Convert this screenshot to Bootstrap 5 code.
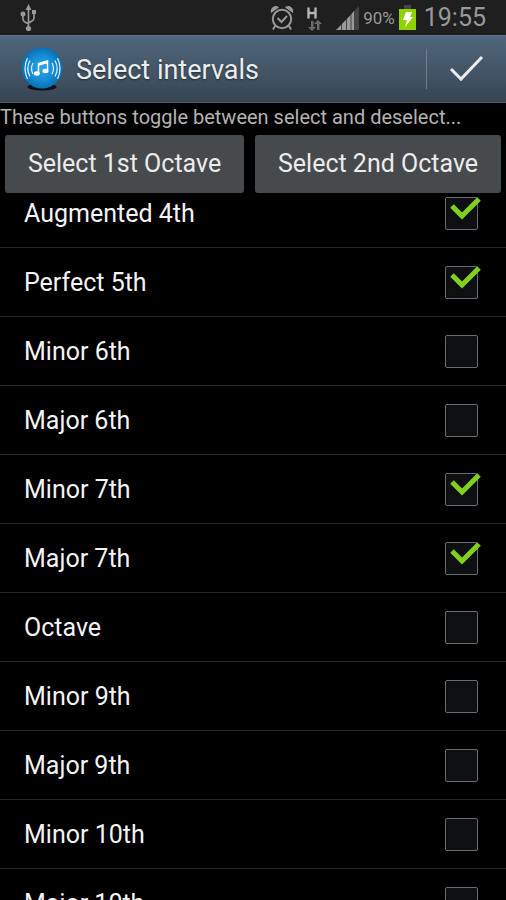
<!DOCTYPE html>
<html lang="en">
<head>
<meta charset="utf-8">
<meta name="viewport" content="width=device-width, initial-scale=1">
<title>Select intervals</title>
<link href="https://cdn.jsdelivr.net/npm/bootstrap@5.3.0/dist/css/bootstrap.min.css" rel="stylesheet">
<style>
body{background:#000;color:#f3f3f3;font-family:Roboto,"Liberation Sans",sans-serif;font-size:25px;line-height:32px}
.status-bar{height:35px;background:#1f1f1f;color:#999;padding:0 20px}
.status-bar svg,.title-bar svg{display:block;flex:none}
.level{font-size:17px;line-height:24px}
.clock{font-size:25px;line-height:32px}
.title-bar{height:68px;padding:0 21px 0 20px;background:linear-gradient(#50677d,#374553);border-top:1px solid #5a7188;border-bottom:1px solid #4a6072;color:#ececec}
.title-bar h1{padding-top:2px;font-size:27px;line-height:32px;font-weight:400;text-shadow:0 1px 2px #1d2a35}
.done-btn{height:40px;padding:0 0 0 22px;border:0;border-left:1px solid #71808d;border-radius:0}
.hint{color:#b3b3b3;font-size:20px;line-height:28px}
.toggles{padding:4px 5px 2px;gap:11px}
.toggle-btn{height:58px;padding:0;background:#464a4d;color:#ececec;font-size:25px;line-height:32px;border:0;border-radius:3px}
.toggle-btn:hover{background:#565b5f;color:#fff}
.interval-list{margin-top:-16px}
.interval-row{height:69px;padding:0 28px 0 24px;border-bottom:1px solid #292929}
.interval-name{padding-top:2px}
.tick-box{width:33px;height:33px}
.tick-box input{appearance:none;display:block;width:33px;height:33px;margin:0;background:#0d0f11;border:1px solid #656c75;border-radius:2px}
.tick-box svg{display:none;left:0;top:0;overflow:visible;pointer-events:none}
.tick-box input:checked + svg{display:block}
</style>
</head>
<body class="vh-100 d-flex flex-column overflow-hidden">
<div class="status-bar d-flex align-items-center flex-shrink-0">
  <svg width="18" height="30" viewBox="0 0 18 30" fill="none" stroke="#999" stroke-width="1.6" aria-hidden="true"><path d="M8.500 4v21M3 12v4q0 2 2 3l3.500 2M14 11v4q0 2-2 3l-3.500 2"/><path d="M8.500 1 11.500 7h-6zM12 7h4v4h-4z" fill="#999" stroke="none"/><circle cx="3" cy="11" r="2.500" fill="#999" stroke="none"/><circle cx="8.500" cy="25.500" r="2.600" fill="#999" stroke="none"/></svg>
  <svg class="ms-auto" width="24" height="26" viewBox="0 0 24 26" fill="none" stroke="#999" aria-hidden="true"><circle cx="12" cy="14" r="9.200" stroke-width="2"/><path d="m7.500 13 4 4 5.500-6" stroke-width="2"/><path d="m5 21-2 3.500M19 21l2 3.500" stroke-width="2"/><path d="M1 8Q0 4 3 2q3-2 6 .5zM23 8q1-4-2-6-3-2-6 .5z" fill="#999" stroke="none"/></svg>
  <svg class="ms-2" width="26" height="30" viewBox="0 0 26 30" fill="none" aria-hidden="true"><path d="M6.500 4.500v11M13.500 4.500v11M6.500 10h7" stroke="#b5b5b5" stroke-width="2.400"/><path d="M9 18h2.500v6H14l-4 4-4-4h3zM15 27h2.500v-6H20l-4-4-4 4h3z" fill="#6a6a6a"/></svg>
  <svg class="ms-2" width="23" height="24" viewBox="0 0 23 24" aria-hidden="true"><path d="M0 24 23 0v24z" fill="#444"/><path d="M0 24 5 19v5zM6 24v-6l4-4v10zM11 24V13l3.500-4v15zM15.500 24V8L18 5v19z" fill="#999"/></svg>
  <span class="level ms-1">90%</span>
  <svg class="ms-1" width="17" height="26" viewBox="0 0 17 26" aria-hidden="true"><path d="M5 0h7v4H5z" fill="#454545"/><path d="M0 4h17v21H0z" fill="#91d300"/><path d="M7 7h6l-2 5h3L6 22l2-7H4z" fill="#fff"/></svg>
  <span class="clock ms-2">19:55</span>
</div>
<header class="title-bar d-flex align-items-center flex-shrink-0">
  <svg width="44" height="46" viewBox="0 0 44 46" aria-hidden="true"><defs><radialGradient id="orb"><stop offset="0" stop-color="#25a7e8"/><stop offset=".6" stop-color="#168dd6"/><stop offset="1" stop-color="#0870b5"/></radialGradient></defs><ellipse cx="22" cy="41" rx="14.500" ry="3.500" fill="#0c1117"/><circle cx="22" cy="22" r="20.500" fill="url(#orb)"/><g fill="none" stroke="#fff"><path d="M18.500 27V17.500l9-2.500v9.500" stroke-width="1.500"/><path d="m18.500 18.500 9-2.500" stroke-width="2.600"/><path d="M13 17q-3 5.500 0 11M10 14.500q-4.500 8 0 16M7.500 12q-5 10.500 0 21M32 17q3 5.500 0 11M35 14.500q4.500 8 0 16M37.500 12q5 10.500 0 21" stroke-width="1.200" stroke-opacity=".85"/></g><g fill="#fff"><ellipse cx="16.800" cy="27.500" rx="3" ry="2.200"/><ellipse cx="25.500" cy="25" rx="3" ry="2.200"/></g></svg>
  <h1 class="mb-0 ms-2 ps-1 me-auto">Select intervals</h1>
  <button class="done-btn btn" type="button" aria-label="Done"><svg width="36" height="28" viewBox="0 0 36 28" fill="none" stroke="#ececec" stroke-width="3" aria-hidden="true"><path d="m2 14 10 10L33 2"/></svg></button>
</header>
<p class="hint mb-0 flex-shrink-0">These buttons toggle between select and deselect...</p>
<div class="toggles d-flex flex-shrink-0">
  <button class="toggle-btn btn flex-fill" type="button">Select 1st Octave</button>
  <button class="toggle-btn btn flex-fill" type="button">Select 2nd Octave</button>
</div>
<main class="flex-fill overflow-hidden">
  <div class="interval-list">
    <label class="interval-row d-flex align-items-center justify-content-between"><span class="interval-name">Augmented 4th</span><span class="tick-box position-relative"><input type="checkbox" checked><svg class="position-absolute" width="36" height="33" fill="none" stroke="#82d01e" stroke-width="5" aria-hidden="true"><path d="m7 9 10 10L34 2"/></svg></span></label>
    <label class="interval-row d-flex align-items-center justify-content-between"><span class="interval-name">Perfect 5th</span><span class="tick-box position-relative"><input type="checkbox" checked><svg class="position-absolute" width="36" height="33" fill="none" stroke="#82d01e" stroke-width="5" aria-hidden="true"><path d="m7 9 10 10L34 2"/></svg></span></label>
    <label class="interval-row d-flex align-items-center justify-content-between"><span class="interval-name">Minor 6th</span><span class="tick-box position-relative"><input type="checkbox"><svg class="position-absolute" width="36" height="33" fill="none" stroke="#82d01e" stroke-width="5" aria-hidden="true"><path d="m7 9 10 10L34 2"/></svg></span></label>
    <label class="interval-row d-flex align-items-center justify-content-between"><span class="interval-name">Major 6th</span><span class="tick-box position-relative"><input type="checkbox"><svg class="position-absolute" width="36" height="33" fill="none" stroke="#82d01e" stroke-width="5" aria-hidden="true"><path d="m7 9 10 10L34 2"/></svg></span></label>
    <label class="interval-row d-flex align-items-center justify-content-between"><span class="interval-name">Minor 7th</span><span class="tick-box position-relative"><input type="checkbox" checked><svg class="position-absolute" width="36" height="33" fill="none" stroke="#82d01e" stroke-width="5" aria-hidden="true"><path d="m7 9 10 10L34 2"/></svg></span></label>
    <label class="interval-row d-flex align-items-center justify-content-between"><span class="interval-name">Major 7th</span><span class="tick-box position-relative"><input type="checkbox" checked><svg class="position-absolute" width="36" height="33" fill="none" stroke="#82d01e" stroke-width="5" aria-hidden="true"><path d="m7 9 10 10L34 2"/></svg></span></label>
    <label class="interval-row d-flex align-items-center justify-content-between"><span class="interval-name">Octave</span><span class="tick-box position-relative"><input type="checkbox"><svg class="position-absolute" width="36" height="33" fill="none" stroke="#82d01e" stroke-width="5" aria-hidden="true"><path d="m7 9 10 10L34 2"/></svg></span></label>
    <label class="interval-row d-flex align-items-center justify-content-between"><span class="interval-name">Minor 9th</span><span class="tick-box position-relative"><input type="checkbox"><svg class="position-absolute" width="36" height="33" fill="none" stroke="#82d01e" stroke-width="5" aria-hidden="true"><path d="m7 9 10 10L34 2"/></svg></span></label>
    <label class="interval-row d-flex align-items-center justify-content-between"><span class="interval-name">Major 9th</span><span class="tick-box position-relative"><input type="checkbox"><svg class="position-absolute" width="36" height="33" fill="none" stroke="#82d01e" stroke-width="5" aria-hidden="true"><path d="m7 9 10 10L34 2"/></svg></span></label>
    <label class="interval-row d-flex align-items-center justify-content-between"><span class="interval-name">Minor 10th</span><span class="tick-box position-relative"><input type="checkbox"><svg class="position-absolute" width="36" height="33" fill="none" stroke="#82d01e" stroke-width="5" aria-hidden="true"><path d="m7 9 10 10L34 2"/></svg></span></label>
    <label class="interval-row d-flex align-items-center justify-content-between"><span class="interval-name">Major 10th</span><span class="tick-box position-relative"><input type="checkbox"><svg class="position-absolute" width="36" height="33" fill="none" stroke="#82d01e" stroke-width="5" aria-hidden="true"><path d="m7 9 10 10L34 2"/></svg></span></label>
  </div>
</main>
<script src="https://cdn.jsdelivr.net/npm/bootstrap@5.3.0/dist/js/bootstrap.bundle.min.js"></script>
</body>
</html>
